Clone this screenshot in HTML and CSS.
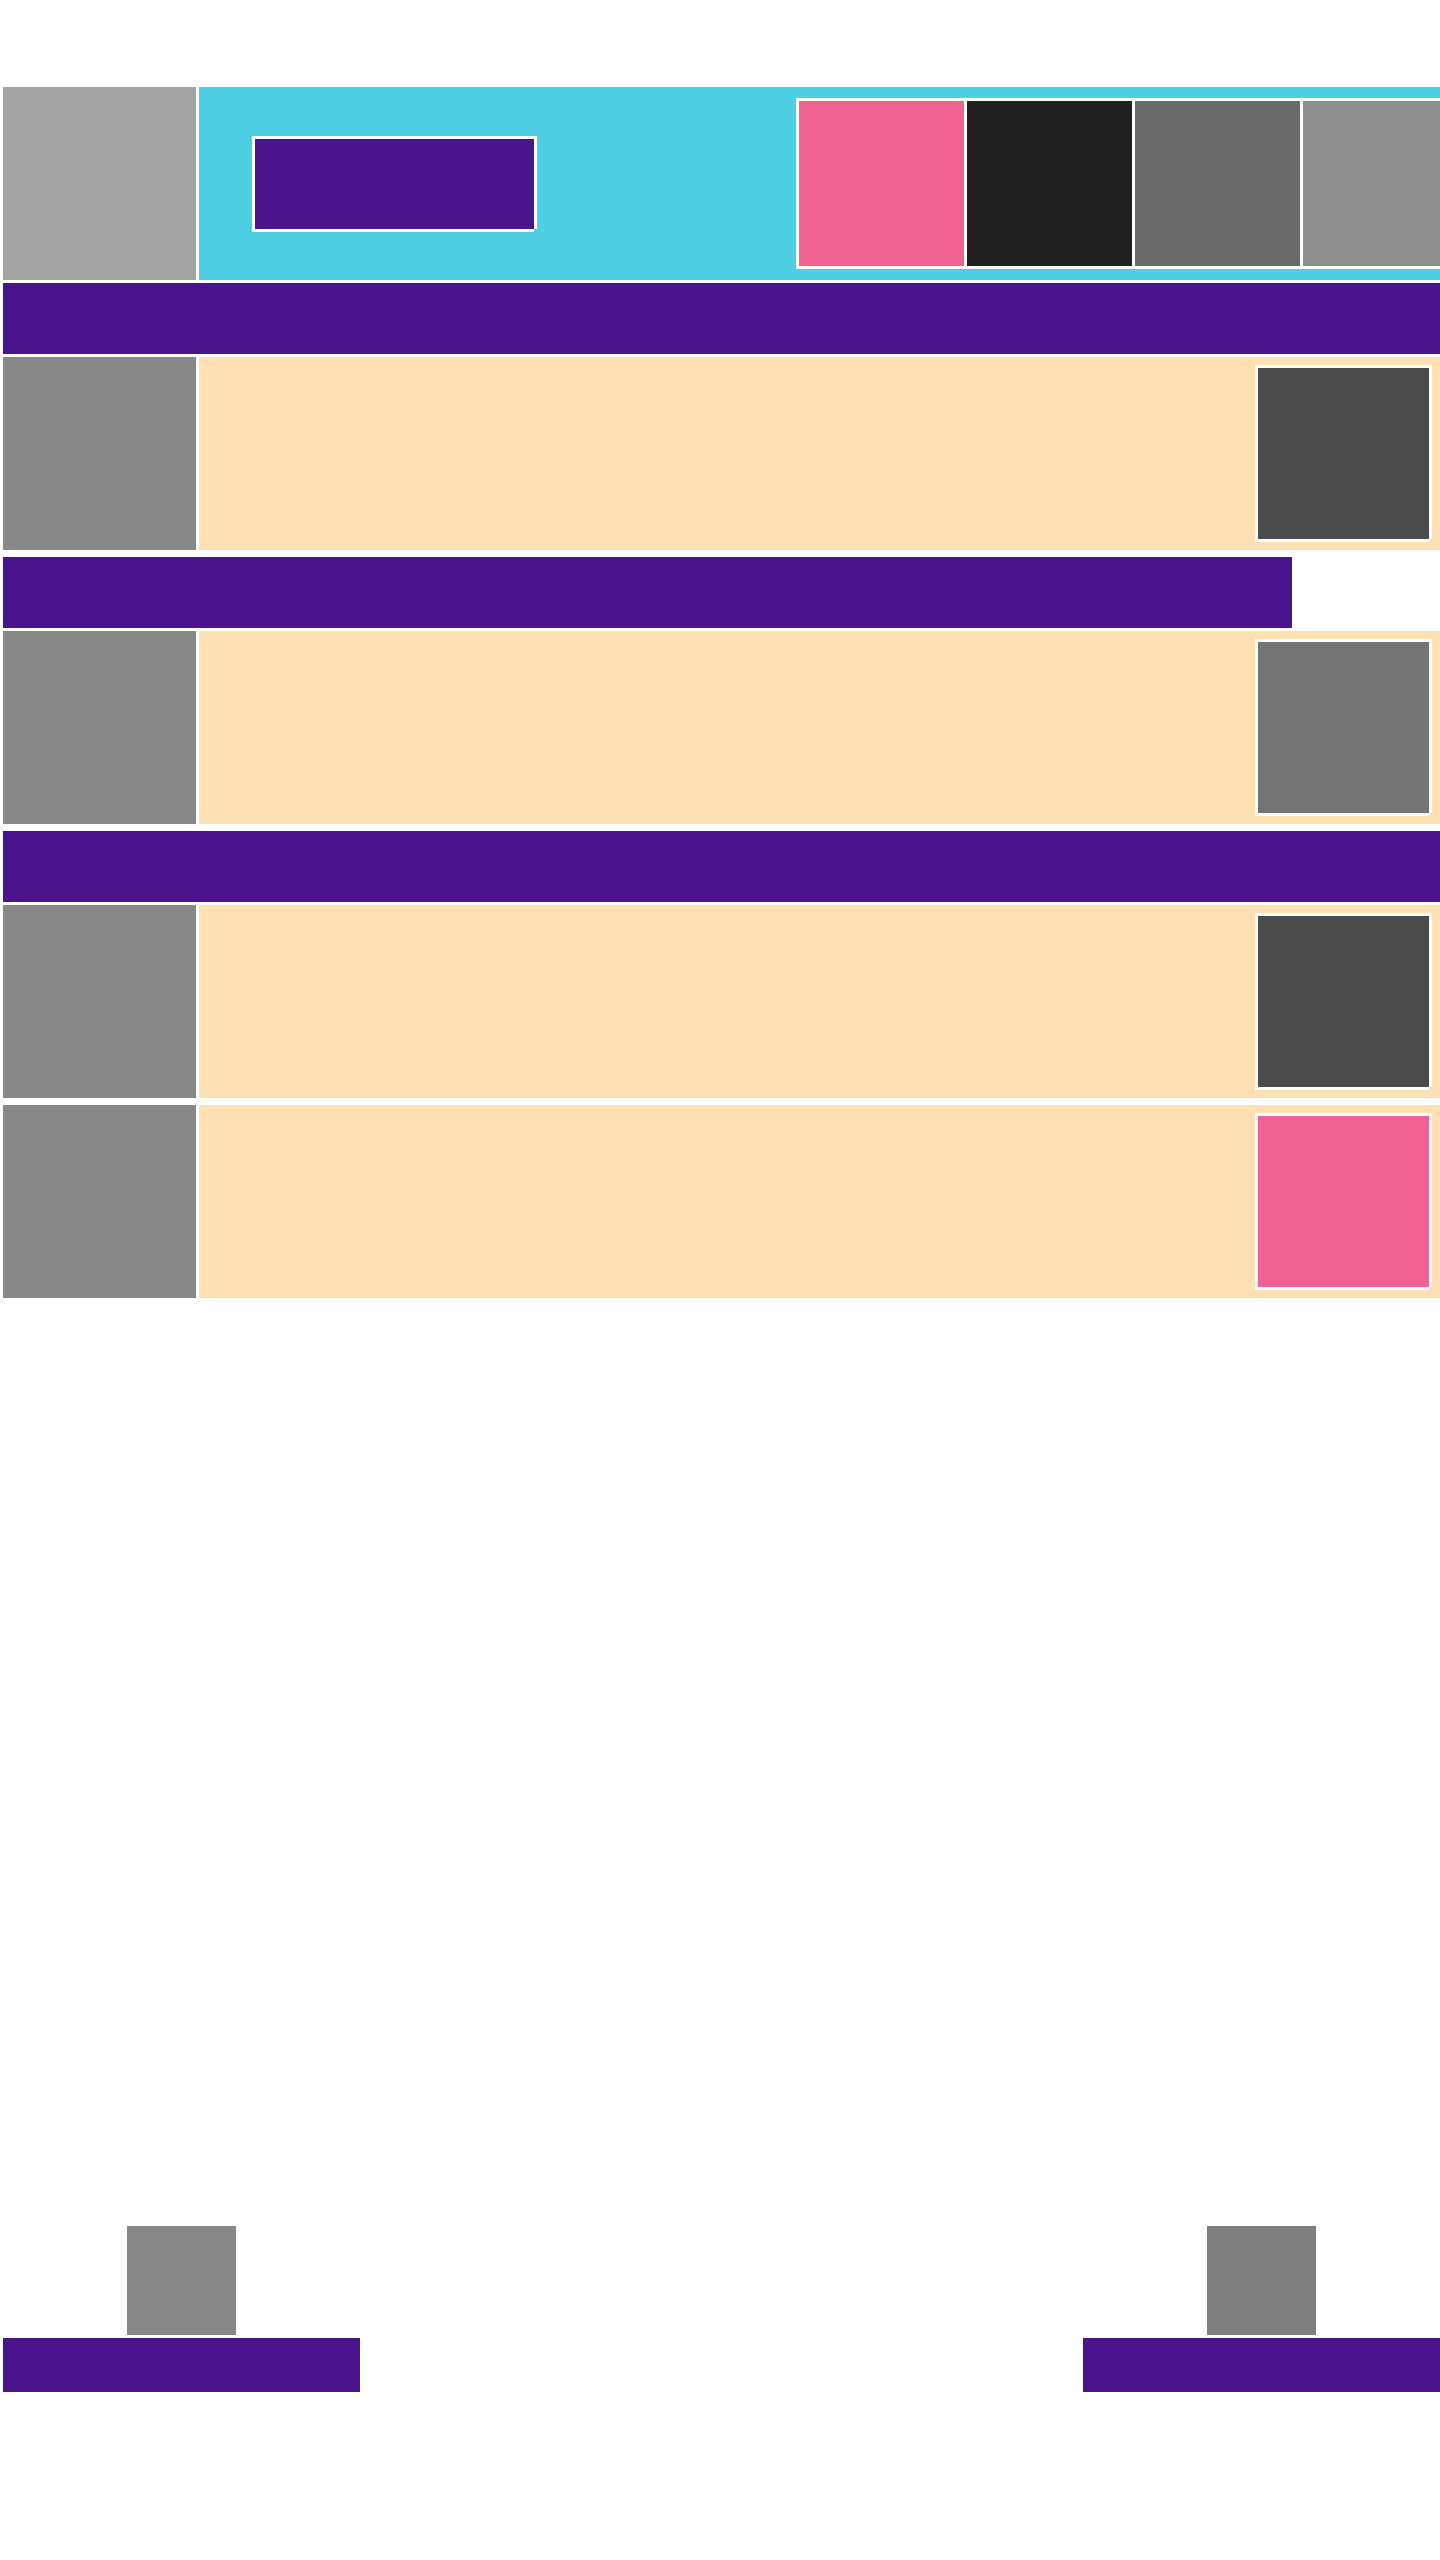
FILE: index.html
```html
<!DOCTYPE html>
<html lang="en">
<head>
<meta charset="utf-8">
<meta name="viewport" content="width=device-width, initial-scale=1">
<title>Blocks</title>
<link rel="stylesheet" href="styles.css">
</head>
<body>
<header class="topbar">
  <button class="tile tile-menu" type="button" aria-label="Menu"></button>
  <div class="topbar-body">
    <div class="title framed"></div>
    <div class="tools">
      <button class="tool pink" type="button" aria-label="Tool 1"></button>
      <button class="tool black" type="button" aria-label="Tool 2"></button>
      <button class="tool gray-dark" type="button" aria-label="Tool 3"></button>
      <button class="tool gray-light tool-last" type="button" aria-label="Tool 4"></button>
    </div>
  </div>
</header>
<main class="list">
  <section class="group">
    <div class="heading"></div>
    <div class="row">
      <div class="tile"></div>
      <div class="row-body"><button class="action framed charcoal" type="button" aria-label="Action 1"></button></div>
    </div>
  </section>
  <section class="group">
    <div class="heading heading-short"></div>
    <div class="row">
      <div class="tile"></div>
      <div class="row-body"><button class="action framed gray-mid" type="button" aria-label="Action 2"></button></div>
    </div>
  </section>
  <section class="group">
    <div class="heading"></div>
    <div class="row">
      <div class="tile"></div>
      <div class="row-body"><button class="action framed charcoal" type="button" aria-label="Action 3"></button></div>
    </div>
  </section>
  <section class="group">
    <div class="row">
      <div class="tile"></div>
      <div class="row-body"><button class="action framed pink" type="button" aria-label="Action 4"></button></div>
    </div>
  </section>
</main>
<nav class="tabs">
  <button class="tab" type="button" aria-label="First tab">
    <span class="tab-icon"></span>
    <span class="tab-label"></span>
  </button>
  <button class="tab tab-end" type="button" aria-label="Last tab">
    <span class="tab-icon tab-icon-dark"></span>
    <span class="tab-label"></span>
  </button>
</nav>
</body>
</html>
```
FILE: styles.css
```css
* {
  box-sizing: border-box;
}

body {
  display: flex;
  flex-direction: column;
  min-height: 100vh;
  margin: 0;
  padding: 87px 0 168px 3px;
  background: #ffffff;
  font-family: Roboto, sans-serif;
}

button {
  margin: 0;
  padding: 0;
  border: 0;
  border-radius: 0;
  background: none;
}

.topbar,
.row {
  display: flex;
  gap: 3px;
}

.topbar {
  margin-bottom: 3px;
}

.tile {
  flex: none;
  width: 193px;
  height: 193px;
  background: #888888;
}

.tile-menu {
  background: #a4a4a4;
}

.topbar-body {
  display: flex;
  flex: 1;
  align-items: center;
  justify-content: space-between;
  padding-left: 56px;
  background: #4dd0e4;
}

.title {
  width: 279px;
  height: 90px;
  background: #4a148c;
}

/* Three-pixel frame with an open bottom-right corner */
.framed {
  box-shadow:
    -3px -3px 0 #ffffff,
    3px -3px 0 #ffffff,
    -3px 3px 0 #ffffff,
    3px 0 0 #ffffff,
    0 3px 0 #ffffff;
}

.tools {
  display: flex;
  gap: 3px;
  padding: 3px 0 3px 3px;
  background: #ffffff;
}

.tool {
  width: 165px;
  height: 165px;
}

.tool-last {
  width: 137px;
}

.list {
  display: flex;
  flex-direction: column;
  gap: 7px;
}

.group {
  display: flex;
  flex-direction: column;
  gap: 3px;
}

.heading {
  height: 71px;
  background: #4a148c;
}

.heading-short {
  margin-right: 148px;
}

.row-body {
  display: flex;
  flex: 1;
  align-items: center;
  justify-content: flex-end;
  padding-right: 11px;
  background: #ffe0b2;
}

.action {
  width: 171px;
  height: 171px;
}

.pink {
  background: #f06292;
}

.black {
  background: #202020;
}

.charcoal {
  background: #4c4c4c;
}

.gray-dark {
  background: #6a6a6a;
}

.gray-mid {
  background: #747474;
}

.gray-light {
  background: #8e8e8e;
}

.tabs {
  display: grid;
  grid-template-columns: repeat(4, 1fr);
  gap: 3px;
  margin-top: auto;
}

.tab {
  display: flex;
  flex-direction: column;
  align-items: center;
  gap: 3px;
}

.tab-end {
  grid-column: 4;
}

.tab-icon {
  width: 109px;
  height: 109px;
  background: #888888;
}

.tab-icon-dark {
  background: #7f7f7f;
}

.tab-label {
  align-self: stretch;
  height: 54px;
  background: #4a148c;
}
```
